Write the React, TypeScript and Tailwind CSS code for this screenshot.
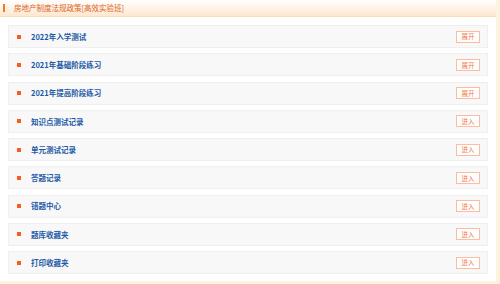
import React from 'react';

type Item = { title: string; action: string };

const items: Item[] = [
  { title: '2022年入学测试', action: '展开' },
  { title: '2021年基础阶段练习', action: '展开' },
  { title: '2021年提高阶段练习', action: '展开' },
  { title: '知识点测试记录', action: '进入' },
  { title: '单元测试记录', action: '进入' },
  { title: '答题记录', action: '进入' },
  { title: '错题中心', action: '进入' },
  { title: '题库收藏夹', action: '进入' },
  { title: '打印收藏夹', action: '进入' },
];

const font = { fontFamily: '"Noto Sans CJK SC", "Noto Sans", sans-serif' };

const App: React.FC = () => {
  return (
    <div className="w-[500px] h-[284px] bg-[#fdf2de] overflow-hidden" style={font}>
      <div className="w-[496px] h-[281px] bg-white">
        {/* 标题栏 */}
        <div className="h-[17px] flex items-center bg-gradient-to-b from-white to-[#fde7cf] border-b border-[#fbdcbc]">
          <span className="ml-[3px] w-[2px] h-[8px] bg-[#f07a1c]" />
          <span className="ml-[9px] text-[7.5px] leading-none text-[#d9661c]">房地产制度法规政策[高效实验班]</span>
        </div>

        {/* 列表 */}
        <div className="pt-[8px] pl-[8px] flex flex-col gap-[5.25px]">
          {items.map(item => (
            <div
              key={item.title}
              className="w-[480px] h-[23px] flex items-center bg-[#f8f8f8] border border-[#efefef]"
            >
              <span className="ml-[8px] w-[4px] h-[4px] bg-[#ff5a1e] shrink-0" />
              <span className="ml-[10px] flex-1 text-[7.5px] leading-none font-bold text-[#1c5aa6]">{item.title}</span>
              <span className="mr-[7px] w-[24px] h-[12px] flex items-center justify-center bg-white border border-[#fbbca0] text-[6.5px] leading-none text-[#f4784a]">
                {item.action}
              </span>
            </div>
          ))}
        </div>
      </div>
    </div>
  );
};

export default App;
